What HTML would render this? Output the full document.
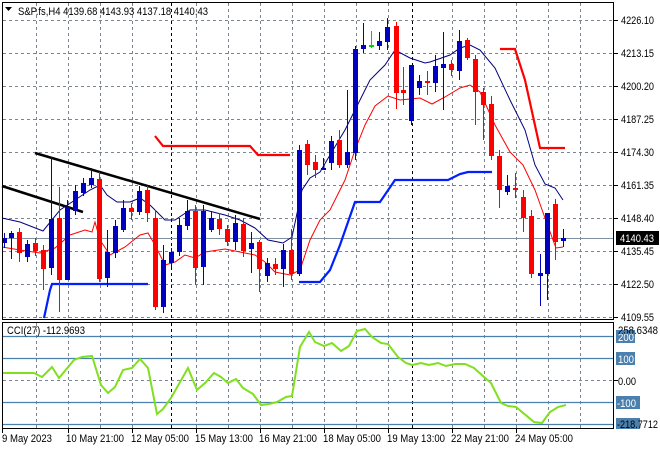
<!DOCTYPE html>
<html><head><meta charset="utf-8"><style>
html,body{margin:0;padding:0;background:#fff;width:660px;height:450px;overflow:hidden}
svg{display:block;font-family:"Liberation Sans",sans-serif}
</style></head><body>
<svg width="660" height="450" viewBox="0 0 660 450" xmlns="http://www.w3.org/2000/svg">
<rect width="660" height="450" fill="#fff"/>
<g stroke="#7a8591" stroke-width="1" stroke-dasharray="3,3" fill="none">
<path d="M3 20.5H613M3 53.5H613M3 86.5H613M3 119.5H613M3 152.5H613M3 185.5H613M3 218.5H613M3 251.5H613M3 284.5H613M3 317.5H613"/>
<path d="M36.5 3V319M68.5 3V319M100.5 3V319M132.5 3V319M196.5 3V319M228.5 3V319M260.5 3V319M292.5 3V319M324.5 3V319M356.5 3V319M388.5 3V319M452.5 3V319M484.5 3V319M516.5 3V319M548.5 3V319M580.5 3V319"/>
<path d="M36.5 323V428M68.5 323V428M100.5 323V428M132.5 323V428M196.5 323V428M228.5 323V428M260.5 323V428M292.5 323V428M324.5 323V428M356.5 323V428M388.5 323V428M452.5 323V428M484.5 323V428M516.5 323V428M548.5 323V428M580.5 323V428M3 380.5H613"/>
</g>
<g stroke="#000" stroke-dasharray="3,3"><path d="M171.5 3V319M412.5 3V319M171.5 323V428M412.5 323V428"/></g>
<path d="M3 238.5H613" stroke="#8090a0" stroke-width="1"/>
<g fill="none" stroke-width="2.2">
<polyline stroke="#f00" points="155,136 163,146 250,146 258,155 290,155"/>
<polyline stroke="#f00" points="500,49 515,49 525,80 540,148 565,148"/>
<polyline stroke="#0020ff" points="44,318 50,290 52,284 148,284"/>
<polyline stroke="#0020ff" points="299,282 320,282 330,270 340,245 355,202 380,202 395,180 448,180 460,174 468,172 492,172"/>
<line stroke="#000" stroke-width="2.5" x1="35" y1="153" x2="260" y2="219"/>
<line stroke="#000" stroke-width="2.5" x1="2" y1="186" x2="83" y2="212"/>
</g>
<polyline fill="none" stroke="#000080" stroke-width="1" points="2,218 20,222 43,231 60,210 75,200 90,190 100,185 107,195 117,202 130,202 140,198 150,205 165,220 175,220 190,210 205,210 225,215 240,220 255,228 268,240 283,243 292,237 302,190 310,178 320,172 330,155 345,130 355,110 370,80 385,65 395,50 410,58 425,63 430,62 450,55 460,48 470,45 480,50 495,68 510,100 525,130 535,165 545,184 555,188 563,200"/>
<polyline fill="none" stroke="#f00" stroke-width="1" points="2,247 20,250 40,253 55,248 70,235 85,230 92,232 95,222 100,240 110,255 125,247 140,235 148,233 155,245 165,265 175,262 185,255 195,258 205,252 225,249 240,252 255,255 265,262 275,272 290,275 300,270 310,240 320,220 330,210 345,180 355,150 365,125 375,106 388,96 400,100 420,98 432,104 445,97 460,88 470,85 480,92 495,125 510,152 523,165 535,190 545,218 553,240 556,248 563,247"/>
<g stroke-width="1">
<path stroke="#0000c0" d="M4.5 233V248M11.5 231V259M27.5 240V262M51.5 157V275M67.5 200V280M75.5 185V215M83.5 178V196M91.5 168V188M107.5 230V287M115.5 220V258M123.5 200V232M139.5 186V215M163.5 245V313M171.5 248V268M179.5 218V256M187.5 200V230M203.5 205V285M211.5 212V232M235.5 215V250M251.5 232V273M267.5 258V282M283.5 244V287M299.5 145V276M323.5 158V170M331.5 136V170M347.5 90V168M355.5 46V160M363.5 23V53M379.5 32V50M387.5 18V50M411.5 77V125M419.5 75V95M435.5 55V92M443.5 32V110M459.5 30V80M507.5 175V195M540.5 254V306M547.5 213V300M563.5 229V247"/>
<path stroke="#f00" d="M19.5 228V262M35.5 238V256M43.5 245V290M59.5 187V312M99.5 172V282M131.5 203V220M147.5 186V222M155.5 210V310M195.5 205V285M219.5 213V235M227.5 225V246M243.5 218V257M259.5 240V292M275.5 258V275M291.5 229V280M307.5 140V175M315.5 155V178M339.5 130V168M396.5 22V109M403.5 67V105M427.5 71V95M451.5 60V76M467.5 38V60M475.5 55V125M483.5 88V140M491.5 96V160M499.5 150V208M515.5 173V198M523.5 190V232M531.5 210V278M555.5 199V260"/>
<path stroke="#00d000" d="M371.5 31V48"/>
</g>
<g fill="#0000c0">
<rect x="2" y="238" width="5" height="5"/><rect x="9" y="233" width="5" height="5"/><rect x="25" y="244" width="5" height="13"/>
<rect x="49" y="219" width="5" height="49"/><rect x="65" y="207" width="5" height="73"/><rect x="73" y="191" width="5" height="20"/>
<rect x="81" y="183" width="5" height="10"/><rect x="89" y="178" width="5" height="7"/><rect x="105" y="252" width="5" height="26"/>
<rect x="113" y="226" width="5" height="27"/><rect x="121" y="208" width="5" height="22"/><rect x="137" y="191" width="5" height="21"/>
<rect x="161" y="260" width="5" height="47"/><rect x="169" y="252" width="5" height="11"/><rect x="177" y="225" width="5" height="27"/>
<rect x="185" y="211" width="5" height="15"/><rect x="201" y="211" width="5" height="56"/><rect x="209" y="218" width="5" height="12"/>
<rect x="233" y="223" width="5" height="19"/><rect x="249" y="243" width="5" height="6"/><rect x="265" y="263" width="5" height="13"/>
<rect x="281" y="250" width="5" height="19"/><rect x="297" y="150" width="5" height="124"/><rect x="321" y="168" width="5" height="2"/>
<rect x="329" y="141" width="5" height="22"/><rect x="345" y="152" width="5" height="13"/><rect x="353" y="49" width="5" height="104"/>
<rect x="361" y="45" width="5" height="4"/><rect x="377" y="41" width="5" height="5"/><rect x="385" y="27" width="5" height="15"/>
<rect x="409" y="65" width="5" height="56"/><rect x="417" y="81" width="5" height="7"/><rect x="433" y="66" width="5" height="17"/>
<rect x="441" y="64" width="5" height="4"/><rect x="457" y="41" width="5" height="30"/><rect x="505" y="186" width="5" height="6"/>
<rect x="538" y="273" width="5" height="3"/><rect x="545" y="213" width="5" height="61"/><rect x="561" y="238" width="5" height="3"/>
</g>
<g fill="#f00">
<rect x="17" y="232" width="5" height="21"/><rect x="33" y="243" width="5" height="8"/><rect x="41" y="250" width="5" height="19"/>
<rect x="57" y="218" width="5" height="62"/><rect x="97" y="179" width="5" height="100"/><rect x="129" y="208" width="5" height="4"/>
<rect x="145" y="190" width="5" height="23"/><rect x="153" y="218" width="5" height="89"/><rect x="193" y="211" width="5" height="57"/>
<rect x="217" y="219" width="5" height="10"/><rect x="225" y="229" width="5" height="13"/><rect x="241" y="224" width="5" height="27"/>
<rect x="257" y="242" width="5" height="27"/><rect x="273" y="264" width="5" height="5"/><rect x="289" y="250" width="5" height="24"/>
<rect x="305" y="144" width="5" height="21"/><rect x="313" y="162" width="5" height="8"/><rect x="337" y="140" width="5" height="25"/>
<rect x="394" y="26" width="5" height="67"/><rect x="401" y="90" width="5" height="3"/><rect x="425" y="81" width="5" height="2"/>
<rect x="449" y="64" width="5" height="6"/><rect x="465" y="40" width="5" height="18"/><rect x="473" y="59" width="5" height="33"/>
<rect x="481" y="92" width="5" height="13"/><rect x="489" y="104" width="5" height="52"/><rect x="497" y="156" width="5" height="34"/>
<rect x="513" y="188" width="5" height="2"/><rect x="521" y="197" width="5" height="21"/><rect x="529" y="216" width="5" height="58"/>
<rect x="553" y="204" width="5" height="38"/>
</g>
<rect x="369" y="45" width="5" height="2" fill="#00d000"/>
<g stroke="#4a7fae" stroke-width="1.2"><path d="M3 336.5H613M3 358.5H613M3 402.5H613M3 424.5H613"/></g>
<polyline fill="none" stroke="#80e020" stroke-width="2" points="3,373 34,373 42,377 52,367 59,378 74,360 82,357 92,356 101,385 108,393 115,387 123,370 132,368 140,359 148,368 157,414 163,409 171,398 188,368 197,390 205,383 214,373 221,377 228,383 236,379 243,388 253,394 261,405 269,404 277,402 286,397 292,396 300,347 309,332 315,342 324,346 332,343 341,351 349,346 357,331 365,329 372,337 381,343 388,344 398,357 406,363 412,365 421,363 429,365 438,363 446,366 455,364 465,364 474,368 484,377 491,383 501,403 508,406 516,407 534,422 542,423 550,412 558,407 566,405"/>
<g fill="none" stroke="#000" stroke-width="1">
<rect x="2.5" y="2.5" width="611" height="317"/>
<rect x="2.5" y="322.5" width="611" height="106"/>
</g>
<g stroke="#000"><path d="M614 20.5h4M614 53.5h4M614 86.5h4M614 119.5h4M614 152.5h4M614 185.5h4M614 218.5h4M614 251.5h4M614 284.5h4M614 317.5h4M614 380.5h4"/>
<path d="M2.5 429v4M68.5 429v4M132.5 429v4M196.5 429v4M260.5 429v4M324.5 429v4M388.5 429v4M452.5 429v4M516.5 429v4"/></g>
<g font-size="11" fill="#000">
<text x="621" y="24" textLength="33" lengthAdjust="spacingAndGlyphs">4226.10</text><text x="621" y="57" textLength="33" lengthAdjust="spacingAndGlyphs">4213.15</text><text x="621" y="90" textLength="33" lengthAdjust="spacingAndGlyphs">4200.20</text>
<text x="621" y="123" textLength="33" lengthAdjust="spacingAndGlyphs">4187.25</text><text x="621" y="156" textLength="33" lengthAdjust="spacingAndGlyphs">4174.30</text><text x="621" y="189" textLength="33" lengthAdjust="spacingAndGlyphs">4161.35</text>
<text x="621" y="222" textLength="33" lengthAdjust="spacingAndGlyphs">4148.40</text><text x="621" y="255" textLength="33" lengthAdjust="spacingAndGlyphs">4135.45</text><text x="621" y="288" textLength="33" lengthAdjust="spacingAndGlyphs">4122.50</text><text x="621" y="321" textLength="33" lengthAdjust="spacingAndGlyphs">4109.55</text>
</g>
<rect x="616" y="231" width="43" height="14" fill="#000"/>
<text x="620" y="242" font-size="11" fill="#fff" textLength="34" lengthAdjust="spacingAndGlyphs">4140.43</text>
<g fill="#4a7fae"><rect x="616" y="330" width="19" height="13"/><rect x="616" y="352" width="19" height="13"/><rect x="616" y="396" width="24" height="13"/><rect x="616" y="418" width="24" height="11"/></g>
<g font-size="11">
<text x="618" y="334" fill="#000" textLength="40" lengthAdjust="spacingAndGlyphs">258.6348</text>
<text x="618" y="341" fill="#fff" textLength="16" lengthAdjust="spacingAndGlyphs">200</text><text x="618" y="363" fill="#fff" textLength="16" lengthAdjust="spacingAndGlyphs">100</text>
<text x="618" y="385" fill="#000" textLength="18" lengthAdjust="spacingAndGlyphs">0.00</text><text x="617" y="407" fill="#fff" textLength="19" lengthAdjust="spacingAndGlyphs">-100</text>
<text x="617" y="428" fill="#000" textLength="41" lengthAdjust="spacingAndGlyphs">-218.7712</text>
<text x="7" y="334" fill="#000" textLength="78" lengthAdjust="spacingAndGlyphs">CCI(27) -112.9693</text>
</g>
<path d="M5 7h7l-3.5 4z" fill="#000"/>
<text x="18" y="15" font-size="11" fill="#000" textLength="190" lengthAdjust="spacingAndGlyphs">S&amp;P.fs,H4  4139.68 4143.93 4137.18 4140.43</text>
<g font-size="11" fill="#000">
<text x="2" y="442" textLength="50" lengthAdjust="spacingAndGlyphs">9 May 2023</text><text x="66" y="442" textLength="58" lengthAdjust="spacingAndGlyphs">10 May 21:00</text><text x="131" y="442" textLength="58" lengthAdjust="spacingAndGlyphs">12 May 05:00</text>
<text x="195" y="442" textLength="58" lengthAdjust="spacingAndGlyphs">15 May 13:00</text><text x="259" y="442" textLength="58" lengthAdjust="spacingAndGlyphs">16 May 21:00</text><text x="323" y="442" textLength="58" lengthAdjust="spacingAndGlyphs">18 May 05:00</text>
<text x="387" y="442" textLength="58" lengthAdjust="spacingAndGlyphs">19 May 13:00</text><text x="451" y="442" textLength="58" lengthAdjust="spacingAndGlyphs">22 May 21:00</text><text x="515" y="442" textLength="58" lengthAdjust="spacingAndGlyphs">24 May 05:00</text>
</g>
</svg>
</body></html>
